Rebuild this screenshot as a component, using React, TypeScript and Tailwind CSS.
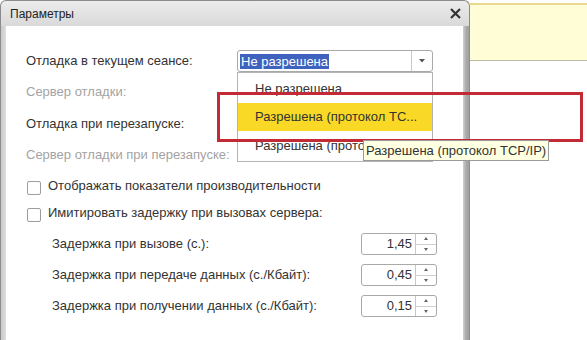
import { type FC } from "react";

const Combo: FC = () => (
	<div className="relative flex h-[22px] w-[196px] items-center rounded-[3px] border border-[#a9a9a9] bg-white">
		<div className="flex flex-1 items-center pl-[2px]">
			<span className="bg-[#3e62bd] px-[1px] leading-[15px] text-white">Не разрешена</span>
		</div>
		<div className="flex h-full w-[21px] items-center justify-center border-l border-[#c8c8c8]">
			<svg width="6" height="4" viewBox="0 0 6 4">
				<path d="M0 0H6L3 3.5Z" fill="#555" />
			</svg>
		</div>
	</div>
);

const Spin: FC<{ value: string }> = ({ value }) => (
	<div className="flex h-[22px] w-[76px] rounded-[3px] border border-[#a9a9a9] bg-white">
		<div className="flex flex-1 items-center justify-end pr-[3px] text-[#333]">{value}</div>
		<div className="flex w-[21px] flex-col border-l border-[#c8c8c8]">
			<div className="flex flex-1 items-center justify-center border-b border-[#d0d0d0]">
				<svg width="4" height="3" viewBox="0 0 4 3">
					<path d="M2 0L4 3H0Z" fill="#666" />
				</svg>
			</div>
			<div className="flex flex-1 items-center justify-center">
				<svg width="4" height="3" viewBox="0 0 4 3">
					<path d="M0 0H4L2 3Z" fill="#666" />
				</svg>
			</div>
		</div>
	</div>
);

const Checkbox: FC<{ label: string }> = ({ label }) => (
	<div className="flex h-[22px] items-center pl-[1px]">
		<div className="mr-[7px] mt-[3px] h-[14px] w-[14px] rounded-[2px] border border-[#9d9d9d] bg-white" />
		<span className="text-[#333]">{label}</span>
	</div>
);

const SpinRow: FC<{ label: string; value: string }> = ({ label, value }) => (
	<div className="mt-[9px] flex h-[22px] items-center pl-[26px]">
		<div className="w-[309px] text-[#333]">{label}</div>
		<Spin value={value} />
	</div>
);

export default function App() {
	return (
		<div className="relative flex h-[340px] w-[587px] overflow-hidden bg-white font-['Liberation_Sans',Arial,sans-serif] text-[13px]">
			{/* dialog */}
			<div className="flex h-full w-[470px] flex-col">
				<div className="flex h-[26px] items-center justify-between rounded-t-[6px] border-l border-t border-r border-[#8a8a8a] bg-gradient-to-b from-[#ececec] to-[#d9d9d9] pl-[9px] pr-[8px]">
					<span className="text-[12px] text-[#222]">Параметры</span>
					<svg width="11" height="11" viewBox="0 0 11 11">
						<path d="M1 1L10 10M10 1L1 10" stroke="#333" strokeWidth="2.2" />
					</svg>
				</div>
				<div className="flex flex-1">
					<div className="w-[6px] border-l border-[#8c8c8c] bg-gradient-to-r from-[#c9c9c9] to-[#dedede]" />
					<div className="flex flex-1 flex-col bg-white pl-[20px] pt-[24px]">
						<div className="flex h-[22px] items-center">
							<div className="w-[211px] text-[#333]">Отладка в текущем сеансе:</div>
							<Combo />
						</div>
						<div className="mt-[9px] flex h-[22px] items-center text-[#a3a3a3]">Сервер отладки:</div>
						<div className="mt-[10px] flex h-[22px] items-center text-[#333]">Отладка при перезапуске:</div>
						<div className="mt-[9px] flex h-[22px] items-center text-[#a3a3a3]">Сервер отладки при перезапуске:</div>
						<div className="mt-[9px]">
							<Checkbox label="Отображать показатели производительности" />
						</div>
						<div className="mt-[5px]">
							<Checkbox label="Имитировать задержку при вызовах сервера:" />
						</div>
						<SpinRow label="Задержка при вызове (с.):" value="1,45" />
						<SpinRow label="Задержка при передаче данных (с./Кбайт):" value="0,45" />
						<SpinRow label="Задержка при получении данных (с./Кбайт):" value="0,15" />
					</div>
					<div className="w-[7px] border-r border-[#8e8e8e] bg-gradient-to-r from-[#d2d2d2] via-[#ababab] to-[#a0a0a0]" />
				</div>
			</div>

			{/* right side */}
			<div className="flex-1 pt-[3px]">
				<div className="h-[58px] border-b border-t-2 border-b-[#bdb9a3] border-t-[#e9d98c] bg-[#fffdd6]" />
			</div>

			{/* dropdown list */}
			<div className="absolute left-[237px] top-[72px] flex h-[90px] w-[196px] flex-col border border-[#b4b4b4] bg-white py-[1px]">
				<div className="flex h-[29px] items-center pl-[17px] text-[#333]">Не разрешена</div>
				<div className="flex h-[29px] items-center bg-[#f9d926] pl-[17px] text-[#333]">Разрешена (протокол TC...</div>
				<div className="flex h-[29px] items-center pl-[17px] text-[#333]">
					<span className="w-[108px] overflow-hidden whitespace-nowrap">Разрешена (протокол HTTP)</span>
				</div>
			</div>

			{/* red highlight */}
			<div className="absolute left-[217px] top-[92px] h-[50px] w-[366px] border-[3px] border-[#c22a36]" />

			{/* tooltip */}
			<div className="absolute left-[363px] top-[140px] flex h-[21px] items-center border border-[#9a9a9a] bg-[#ffffe1] px-[2px] text-[#333]">
				Разрешена (протокол TCP/IP)
			</div>
		</div>
	);
}
